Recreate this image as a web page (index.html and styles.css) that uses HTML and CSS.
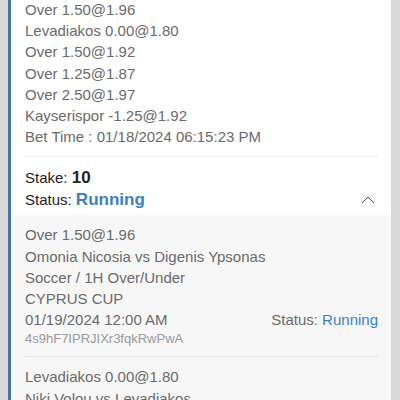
FILE: index.html
```html
<!DOCTYPE html>
<html lang="en">
<head>
  <meta charset="UTF-8" />
  <meta name="viewport" content="width=device-width, initial-scale=1" />
  <title>Bet Ticket</title>
  <link rel="stylesheet" href="styles.css">
</head>
<body>

<div class="ticket">
  <!-- Summary -->
  <div class="summary">
    <div class="line">Over 1.50@1.96</div>
    <div class="line">Levadiakos 0.00@1.80</div>
    <div class="line">Over 1.50@1.92</div>
    <div class="line">Over 1.25@1.87</div>
    <div class="line">Over 2.50@1.97</div>
    <div class="line">Kayserispor -1.25@1.92</div>
    <div class="line">Bet Time : 01/18/2024 06:15:23 PM</div>
  </div>

  <div class="stake-box">
    <div class="stake-row">Stake: <b>10</b></div>
    <div class="status-row">
      <span>Status: <b class="running">Running</b></span>
      <svg class="chevron" width="14" height="8" viewBox="0 0 14 8">
        <polyline points="1,7 7,1 13,7" fill="none" stroke="#555" stroke-width="1" />
      </svg>
    </div>
  </div>

  <!-- Legs -->
  <div class="legs">
    <div class="leg">
      <div class="line">Over 1.50@1.96</div>
      <div class="line">Omonia Nicosia vs Digenis Ypsonas</div>
      <div class="line">Soccer / 1H Over/Under</div>
      <div class="line">CYPRUS CUP</div>
      <div class="line date-row">
        <span>01/19/2024 12:00 AM</span>
        <span>Status: <span class="blue">Running</span></span>
      </div>
      <div class="hash">4s9hF7IPRJIXr3fqkRwPwA</div>
    </div>
    <div class="leg">
      <div class="line">Levadiakos 0.00@1.80</div>
      <div class="line">Niki Volou vs Levadiakos</div>
    </div>
  </div>
</div>

</body>
</html>
```

FILE: styles.css
```css
body {
  margin: 0;
  background: #d9d9d9;
  font-family: 'Liberation Sans', Arial, sans-serif;
  color: #6a6a6a;
  overflow: hidden;
}
.ticket {
  margin: -1px 9px 0 8px;
  border-left: 3px solid #4a74a6;
  background: #fff;
}
.line {
  font-size: 15px;
  line-height: 21.2px;
  white-space: nowrap;
}
.summary {
  margin: 0 13px 0 14px;
  padding-bottom: 9px;
  border-bottom: 1px solid #ececec;
}
.stake-box {
  padding: 10px 13px 5px 14px;
  color: #222;
  font-size: 15px;
  line-height: 21.5px;
}
.stake-box b {
  font-size: 17px;
}
.status-row {
  display: flex;
  justify-content: space-between;
  align-items: center;
}
.running {
  color: #3b7fc4;
}
.chevron {
  margin-right: 3px;
}
.legs {
  background: #f7f7f7;
  padding: 9px 13px 0 14px;
}
.leg {
  padding-bottom: 8px;
  border-bottom: 1px solid #e6e6e6;
  margin-bottom: 9px;
}
.date-row {
  display: flex;
  justify-content: space-between;
}
.blue {
  color: #3b7fc4;
}
.hash {
  font-size: 13px;
  line-height: 18px;
  color: #9a9a9a;
}
```
